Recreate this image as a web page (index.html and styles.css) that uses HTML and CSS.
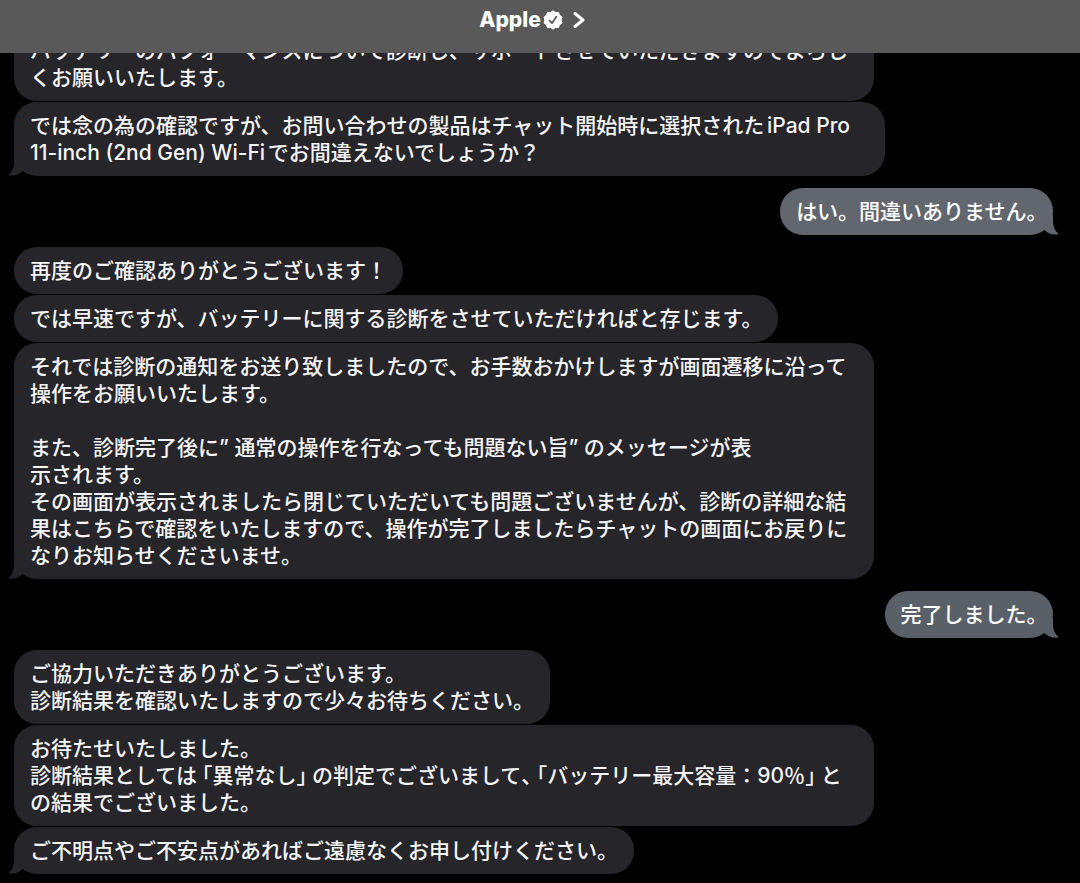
FILE: index.html
```html
<!DOCTYPE html>
<html lang="ja">
<head>
    <meta charset="UTF-8">
    <meta name="viewport" content="width=device-width, initial-scale=1">
    <title>Apple</title>
    <link rel="stylesheet" href="styles.css">
</head>
<body>
    <svg class="defs" aria-hidden="true">
        <symbol id="tail" viewBox="0 0 20 20">
            <path d="M6 0 V5 C6 11 5 15 0 19.5 C6 20 10 19 14 15.5 L20 12 V0 Z"/>
        </symbol>
    </svg>

    <header class="header">
        <button class="contact" type="button">
            <span>Apple</span>
            <svg class="badge" viewBox="0 0 20 20" aria-hidden="true">
                <path fill="#fff" d="M10 .8 L12.5 2.6 L15.5 2.4 L16.5 5.3 L19 7 L18.1 10 L19 13 L16.5 14.7 L15.5 17.6 L12.5 17.4 L10 19.2 L7.5 17.4 L4.5 17.6 L3.5 14.7 L1 13 L1.9 10 L1 7 L3.5 5.3 L4.5 2.4 L7.5 2.6 Z" stroke="#fff" stroke-width="1" stroke-linejoin="round"/>
                <path fill="none" stroke="#595959" stroke-width="1.8" stroke-linecap="round" stroke-linejoin="round" d="M6.6 10.6 L9 13.2 L13.4 6.8"/>
            </svg>
            <svg class="chevron" viewBox="0 0 12 18" aria-hidden="true">
                <path fill="none" stroke="#fff" stroke-width="3" stroke-linecap="round" stroke-linejoin="round" d="M2 2.5 L10 9 L2 15.5"/>
            </svg>
        </button>
    </header>

    <main class="chat">
        <div class="group">
            <p class="bubble">バッテリーのパフォーマンスについて診断し、サポートさせていただきますのでよろしくお願いいたします。</p>
            <p class="bubble wide">では念の為の確認ですが、お問い合わせの製品はチャット開始時に選択されたiPad Pro 11-inch (2nd Gen) Wi-Fiでお間違えないでしょうか？<svg class="tail"><use href="#tail"/></svg></p>
        </div>

        <div class="group sent">
            <p class="bubble">はい。間違いありません<span class="half">。</span><svg class="tail"><use href="#tail"/></svg></p>
        </div>

        <div class="group">
            <p class="bubble">再度のご確認ありがとうございます！</p>
            <p class="bubble">では早速ですが、バッテリーに関する診断をさせていただければと存じます。</p>
            <p class="bubble">それでは診断の通知をお送り致しましたので、お手数おかけしますが画面遷移に沿って操作をお願いいたします。<br><br>また、診断完了後に” 通常の操作を行なっても問題ない旨” のメッセージが表<br>示されます。<br>その画面が表示されましたら閉じていただいても問題ございませんが、診断の詳細な結果はこちらで確認をいたしますので、操作が完了しましたらチャットの画面にお戻りになりお知らせくださいませ。<svg class="tail"><use href="#tail"/></svg></p>
        </div>

        <div class="group sent later">
            <p class="bubble">完了しました<span class="half">。</span><svg class="tail"><use href="#tail"/></svg></p>
        </div>

        <div class="group">
            <p class="bubble">ご協力いただきありがとうございます。<br>診断結果を確認いたしますので少々お待ちください。</p>
            <p class="bubble full">お待たせいたしました。<br>診断結果としては<span class="quoted"><span class="half">「</span>異常なし<span class="half">」</span></span>の判定でございまして<span class="half">、</span><span class="quoted"><span class="half">「</span>バッテリー最大容量：90％<span class="half">」</span></span>と<br>の結果でございました。</p>
            <p class="bubble">ご不明点やご不安点があればご遠慮なくお申し付けください。<svg class="tail"><use href="#tail"/></svg></p>
        </div>
    </main>
</body>
</html>
```
FILE: styles.css
```css
* {
    box-sizing: border-box;
}

body {
    margin: 0;
    background-color: #000;
    color: #f5f5f7;
    font-family: Inter, "Noto Sans CJK JP", sans-serif;
    font-size: 21px;
    font-weight: 500;
    line-height: 27px;
}

.defs {
    display: none;
}

.header {
    position: fixed;
    top: 0;
    left: 0;
    right: 0;
    z-index: 1;
    display: flex;
    justify-content: center;
    padding: 6px 16px 20px 0;
    background-color: #595959;
}

.contact {
    display: flex;
    align-items: center;
    padding: 0;
    border: none;
    background: none;
    color: #fff;
    font: inherit;
    font-weight: 800;
    cursor: pointer;
}

.badge {
    width: 20px;
    height: 20px;
    margin-left: 2px;
}

.chevron {
    width: 12px;
    height: 18px;
    margin-left: 10px;
}

.chat {
    display: flex;
    flex-direction: column;
    gap: 12px;
    padding: 27px 27px 9px 14px;
}

.group {
    display: flex;
    flex-direction: column;
    align-items: flex-start;
    gap: 1px;
}

.bubble {
    position: relative;
    max-width: 860px;
    margin: 0;
    padding: 10px 16px;
    border-radius: 23px;
    background-color: #26252a;
    text-autospace: normal;
}

.wide {
    max-width: 871px;
}

.full {
    width: 100%;
}

.tail {
    position: absolute;
    left: -6px;
    bottom: 0;
    width: 20px;
    height: 20px;
    fill: #26252a;
}

.sent {
    align-items: flex-end;
}

.sent .bubble {
    background-color: #62676f;
    color: #fff;
}

.sent .tail {
    left: auto;
    right: -6px;
    transform: scaleX(-1);
    fill: #62676f;
}

.later .bubble {
    background-color: #5a6068;
}

.later .tail {
    fill: #5a6068;
}

/* half-width punctuation */
.half {
    font-feature-settings: "halt";
}

.quoted {
    margin: 0 5px;
}
```
